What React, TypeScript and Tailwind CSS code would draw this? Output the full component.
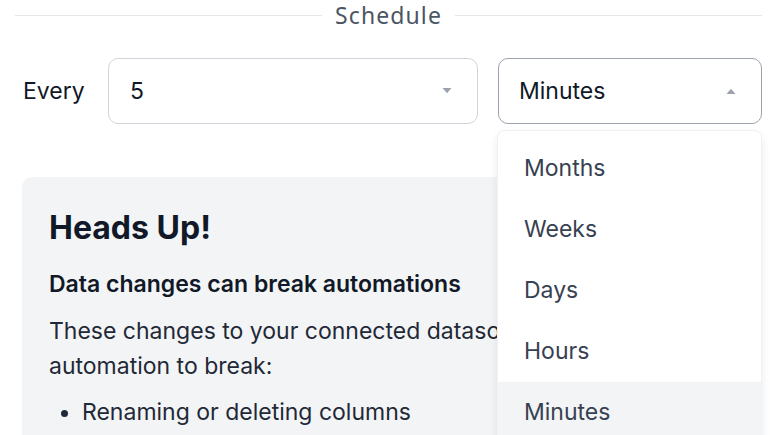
import React from "react";

function Caret({ up }: { up?: boolean }) {
  return (
    <svg width="12" height="8" viewBox="0 0 12 8" className="text-[#9ca3af]">
      {up ? (
        <path d="M1.5 7 L6 1.8 L10.5 7 Z" fill="currentColor" />
      ) : (
        <path d="M1.5 1 L6 6.2 L10.5 1 Z" fill="currentColor" />
      )}
    </svg>
  );
}

export default function App() {
  const items = ["Months", "Weeks", "Days", "Hours", "Minutes"];
  return (
    <div
      className="relative w-[774px] h-[435px] overflow-hidden bg-white"
      style={{ fontFamily: "Inter, 'Noto Sans', sans-serif" }}
    >
      <div className="flex items-center h-[31px] pl-[15px] pr-[12px]">
        <div className="flex-1 h-px bg-[#e5e7eb]" />
        <div
          className="px-[13px] text-[23px] leading-[31px] text-[#4b5563]"
          style={{ fontFamily: "'Noto Sans', Inter, sans-serif", letterSpacing: "1.1px" }}
        >
          Schedule
        </div>
        <div className="flex-1 h-px bg-[#e5e7eb]" />
      </div>

      <div className="flex items-center mt-[27px] pl-[23px]">
        <div className="text-[23px] text-[#111827] w-[85px]">Every</div>
        <div className="w-[370px] h-[66px] rounded-[10px] border border-[#d1d5db] flex items-center justify-between pl-[21px] pr-[24px]">
          <span className="text-[23px] text-[#111827]">5</span>
          <Caret />
        </div>
        <div className="relative ml-[20px] w-[264px] h-[66px]">
          <div className="w-full h-full rounded-[10px] border border-[#9ca3af] flex items-center justify-between pl-[20px] pr-[24px]">
            <span className="text-[23px] text-[#111827]">Minutes</span>
            <Caret up />
          </div>
          <div className="absolute left-[-1px] top-[72px] w-[265px] h-[320px] bg-white rounded-[8px] border border-[#f0f1f3] shadow-[0_4px_10px_rgba(0,0,0,0.08)] pt-[7px] z-10">
            {items.map((it) => (
              <div
                key={it}
                className={`h-[61px] flex items-center pl-[26px] text-[23px] text-[#374151] ${
                  it === "Minutes" ? "bg-[#f3f4f6]" : ""
                }`}
              >
                {it}
              </div>
            ))}
          </div>
        </div>
      </div>

      <div className="ml-[22px] mr-[12px] mt-[53px] rounded-[10px] bg-[#f3f4f6] pt-[29px] pl-[27px] pr-[27px] pb-[20px]">
        <div className="text-[32px] leading-[44px] font-bold text-[#111827]">Heads Up!</div>
        <div className="mt-[19px] text-[23px] leading-[30px] font-semibold text-[#111827]">
          Data changes can break automations
        </div>
        <div className="mt-[15px] text-[23px] leading-[35px] text-[#1f2937]">
          These changes to your connected datasource could cause this
          <br />
          automation to break:
        </div>
        <ul className="mt-[11px] pl-[33px] list-disc text-[23px] leading-[35px] text-[#1f2937]">
          <li>Renaming or deleting columns</li>
        </ul>
      </div>
    </div>
  );
}
